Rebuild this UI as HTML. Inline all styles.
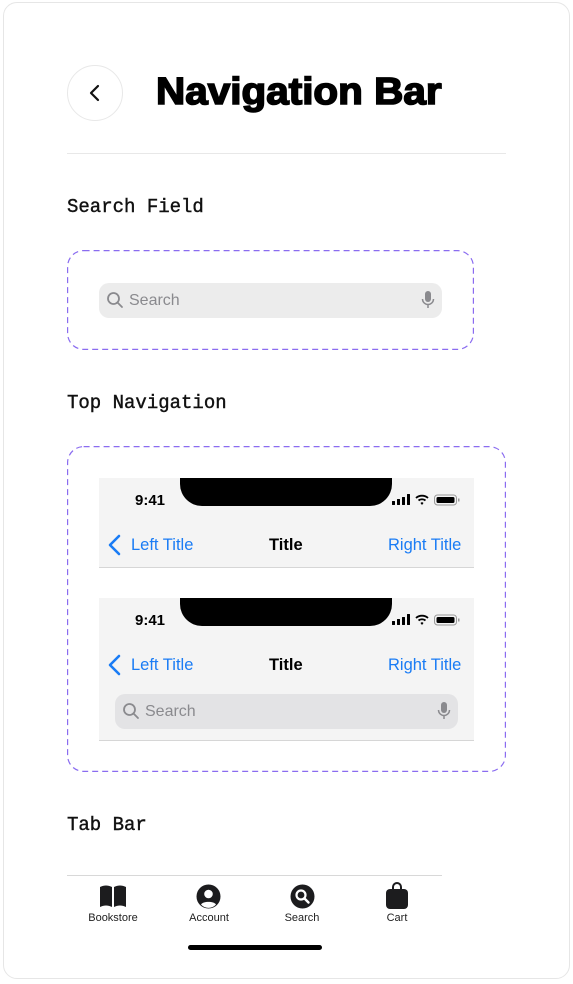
<!DOCTYPE html>
<html><head><style>
*{margin:0;padding:0;box-sizing:border-box}
body{width:573px;height:984px;background:#fff;position:relative;font-family:"Liberation Sans",sans-serif;overflow:hidden}
.a{position:absolute}
.card{left:3px;top:2px;width:567px;height:977px;border:1px solid #e6e6e6;border-radius:14px}
.mono{font-family:"Liberation Mono",monospace;font-size:19px;font-weight:normal;color:#111;-webkit-text-stroke:0.4px #111}
.sb{background:#ececec;border-radius:10px;color:#8a8a8e;font-size:16px}
.ph{background:#f4f4f4;border-bottom:1px solid #d6d6d6}
.notch{background:#000;border-radius:0 0 22px 22px}
.blue{color:#1a7cf5;font-size:16.5px}
.tl{font-size:11px;color:#222;text-align:center;width:80px}
</style></head><body>
<div class="a card"></div>
<div class="a" style="left:67px;top:65px;width:56px;height:56px;border:1px solid #e8e8e8;border-radius:50%"></div>
<svg class="a" style="left:85px;top:83px" width="20" height="20" viewBox="0 0 20 20"><path d="M13 3L6 10l7 7" fill="none" stroke="#111" stroke-width="2.2" stroke-linecap="round" stroke-linejoin="round"/></svg>
<div class="a" style="left:156px;top:71px;font-size:38px;font-weight:bold;color:#000;-webkit-text-stroke:1.6px #000;transform:scaleX(1.065);transform-origin:left top;white-space:nowrap">Navigation Bar</div>
<div class="a" style="left:67px;top:153px;width:439px;height:1px;background:#e8e8e8"></div>

<div class="a mono" style="left:67px;top:196px">Search Field</div>
<svg class="a" style="left:67px;top:250px" width="407" height="100"><rect x="0.6" y="0.6" width="405.8" height="98.8" rx="16" fill="none" stroke="#8a6cf0" stroke-width="1.2" stroke-dasharray="6 4"/></svg>
<div class="a sb" style="left:99px;top:283px;width:343px;height:35px"></div>
<svg class="a" style="left:106px;top:291px" width="18" height="18" viewBox="0 0 18 18"><circle cx="7.5" cy="7.5" r="5.5" fill="none" stroke="#8a8a8e" stroke-width="1.8"/><path d="M11.5 11.5l4.5 4.5" stroke="#8a8a8e" stroke-width="1.8" stroke-linecap="round"/></svg>
<div class="a" style="left:129px;top:292px;font-size:16px;color:#8a8a8e">Search</div>
<svg class="a" style="left:420px;top:290px" width="16" height="20" viewBox="0 0 16 20"><rect x="5" y="1" width="6" height="11" rx="3" fill="#8a8a8e"/><path d="M2.5 9a5.5 5.5 0 0 0 11 0M8 14.5V18" fill="none" stroke="#8a8a8e" stroke-width="1.5"/></svg>

<div class="a mono" style="left:67px;top:392px">Top Navigation</div>
<svg class="a" style="left:67px;top:446px" width="439" height="326"><rect x="0.6" y="0.6" width="437.8" height="324.8" rx="16" fill="none" stroke="#8a6cf0" stroke-width="1.2" stroke-dasharray="6 4"/></svg>

<div class="a ph" style="left:99px;top:478px;width:375px;height:90px"></div>
<div class="a notch" style="left:180px;top:478px;width:212px;height:28px"></div>
<div class="a" style="left:135px;top:492px;font-size:15px;font-weight:bold">9:41</div>
<svg class="a" style="left:392px;top:493px" width="70" height="14" viewBox="0 0 70 14"><rect x="0" y="8" width="3" height="4" rx=".5"/><rect x="5" y="6" width="3" height="6" rx=".5"/><rect x="10" y="4" width="3" height="8" rx=".5"/><rect x="15" y="1" width="3" height="11" rx=".5"/><path d="M24 5a9 9 0 0 1 12 0M26.5 7.5a5.5 5.5 0 0 1 7 0" fill="none" stroke="#000" stroke-width="1.8"/><path d="M28.5 10l1.5 2 1.5-2a2.2 2.2 0 0 0-3 0z"/><rect x="42.5" y="2" width="22" height="10" rx="3" fill="none" stroke="#999" stroke-width="1"/><rect x="44.5" y="4" width="18" height="6" rx="1.5"/><rect x="66" y="5.5" width="1.5" height="3" fill="#999"/></svg>
<svg class="a" style="left:107px;top:534px" width="16" height="22" viewBox="0 0 16 22"><path d="M12 2L3 11l9 9" fill="none" stroke="#1a7cf5" stroke-width="2.6" stroke-linecap="round" stroke-linejoin="round"/></svg>
<div class="a blue" style="left:131px;top:536px">Left Title</div>
<div class="a" style="left:269px;top:536px;font-size:16.5px;font-weight:bold">Title</div>
<div class="a blue" style="left:388px;top:536px">Right Title</div>

<div class="a ph" style="left:99px;top:598px;width:375px;height:143px"></div>
<div class="a notch" style="left:180px;top:598px;width:212px;height:28px"></div>
<div class="a" style="left:135px;top:612px;font-size:15px;font-weight:bold">9:41</div>
<svg class="a" style="left:392px;top:613px" width="70" height="14" viewBox="0 0 70 14"><rect x="0" y="8" width="3" height="4" rx=".5"/><rect x="5" y="6" width="3" height="6" rx=".5"/><rect x="10" y="4" width="3" height="8" rx=".5"/><rect x="15" y="1" width="3" height="11" rx=".5"/><path d="M24 5a9 9 0 0 1 12 0M26.5 7.5a5.5 5.5 0 0 1 7 0" fill="none" stroke="#000" stroke-width="1.8"/><path d="M28.5 10l1.5 2 1.5-2a2.2 2.2 0 0 0-3 0z"/><rect x="42.5" y="2" width="22" height="10" rx="3" fill="none" stroke="#999" stroke-width="1"/><rect x="44.5" y="4" width="18" height="6" rx="1.5"/><rect x="66" y="5.5" width="1.5" height="3" fill="#999"/></svg>
<svg class="a" style="left:107px;top:654px" width="16" height="22" viewBox="0 0 16 22"><path d="M12 2L3 11l9 9" fill="none" stroke="#1a7cf5" stroke-width="2.6" stroke-linecap="round" stroke-linejoin="round"/></svg>
<div class="a blue" style="left:131px;top:656px">Left Title</div>
<div class="a" style="left:269px;top:656px;font-size:16.5px;font-weight:bold">Title</div>
<div class="a blue" style="left:388px;top:656px">Right Title</div>
<div class="a sb" style="left:115px;top:694px;width:343px;height:35px;background:#e3e3e5"></div>
<svg class="a" style="left:122px;top:702px" width="18" height="18" viewBox="0 0 18 18"><circle cx="7.5" cy="7.5" r="5.5" fill="none" stroke="#8a8a8e" stroke-width="1.8"/><path d="M11.5 11.5l4.5 4.5" stroke="#8a8a8e" stroke-width="1.8" stroke-linecap="round"/></svg>
<div class="a" style="left:145px;top:703px;font-size:16px;color:#8a8a8e">Search</div>
<svg class="a" style="left:436px;top:701px" width="16" height="20" viewBox="0 0 16 20"><rect x="5" y="1" width="6" height="11" rx="3" fill="#8a8a8e"/><path d="M2.5 9a5.5 5.5 0 0 0 11 0M8 14.5V18" fill="none" stroke="#8a8a8e" stroke-width="1.5"/></svg>

<div class="a mono" style="left:67px;top:814px">Tab Bar</div>
<div class="a" style="left:67px;top:875px;width:375px;height:1px;background:#d8d8d8"></div>
<svg class="a" style="left:99px;top:884px" width="28" height="24" viewBox="0 0 28 24"><path d="M1 3c4-2 8-2 12 0v20c-4-2-8-2-12 0z M15 3c4-2 8-2 12 0v20c-4-2-8-2-12 0z" fill="#1c1c1e"/></svg>
<svg class="a" style="left:196px;top:884px" width="25" height="25" viewBox="0 0 25 25"><circle cx="12.5" cy="12.5" r="12" fill="#1c1c1e"/><circle cx="12.5" cy="10" r="4.3" fill="#fff"/><path d="M5 20.5c2-3.5 13-3.5 15 0a10 10 0 0 1-15 0z" fill="#fff"/></svg>
<svg class="a" style="left:290px;top:884px" width="25" height="25" viewBox="0 0 25 25"><circle cx="12.5" cy="12.5" r="12" fill="#1c1c1e"/><circle cx="11" cy="11" r="4.5" fill="none" stroke="#fff" stroke-width="2.2"/><path d="M14.5 14.5l4 4" stroke="#fff" stroke-width="2.4" stroke-linecap="round"/></svg>
<svg class="a" style="left:386px;top:882px" width="22" height="27" viewBox="0 0 22 27"><path d="M7 7V5a4 4 0 0 1 8 0v2" fill="none" stroke="#1c1c1e" stroke-width="2"/><rect x="0" y="7" width="22" height="20" rx="4" fill="#1c1c1e"/></svg>
<div class="a tl" style="left:73px;top:912px">Bookstore</div>
<div class="a tl" style="left:169px;top:912px">Account</div>
<div class="a tl" style="left:262px;top:912px">Search</div>
<div class="a tl" style="left:357px;top:912px">Cart</div>
<div class="a" style="left:188px;top:945px;width:134px;height:5px;border-radius:3px;background:#000"></div>
</body></html>
